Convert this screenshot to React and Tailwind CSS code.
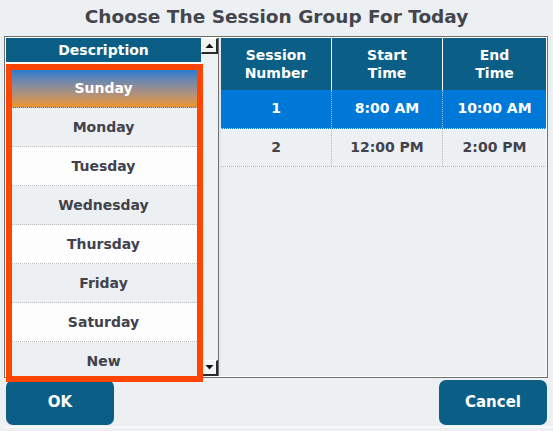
const DAYS = ["Sunday", "Monday", "Tuesday", "Wednesday", "Thursday", "Friday", "Saturday", "New"];

const SESSIONS = [
  { num: "1", start: "8:00 AM", end: "10:00 AM" },
  { num: "2", start: "12:00 PM", end: "2:00 PM" },
];

function ScrollBtn({ up }) {
  return (
    <div className="h-[16px] w-[17px] flex items-center justify-center bg-[#f3f4f5] border-t border-l border-white border-b-2 border-r-2 border-b-[#2b2b2b] border-r-[#2b2b2b]">
      <svg width="9" height="5" viewBox="0 0 9 5">
        {up ? <path d="M0.5 5 L4.5 0.5 L8.5 5 Z" fill="#111" /> : <path d="M0.5 0 L4.5 4.5 L8.5 0 Z" fill="#111" />}
      </svg>
    </div>
  );
}

export default function App() {
  return (
    <div className="relative w-[553px] h-[431px] overflow-hidden bg-[#ecf0f3] font-['DejaVu_Sans',sans-serif] font-bold">
      <div className="h-[36px] flex items-center justify-center text-[18.5px] text-[#45454d] pb-[2px]">
        Choose The Session Group For Today
      </div>

      <div className="ml-[4px] w-[544px] h-[342px] border border-[#6f6f6f] bg-white pt-[1px] px-px pb-px flex">
        {/* left list */}
        <div className="w-[195px] flex flex-col overflow-hidden">
          <div className="h-[24px] flex items-center justify-center bg-[#0b5f86] text-white text-[14px] shrink-0">
            Description
          </div>
          <div className="flex-1 overflow-hidden bg-white pt-[7px]">
            {DAYS.map((d, i) => (
              <div
                key={d}
                className={
                  "h-[39px] flex items-center justify-center text-[14px] border-b border-dotted border-[#bdbdbd] " +
                  (i === 0
                    ? "bg-linear-to-b from-[#1777d1] to-[#ec931d] text-white"
                    : i % 2 === 1
                    ? "bg-[#ecf0f3] text-[#42424c]"
                    : "bg-[#fdfdfd] text-[#42424c]")
                }
              >
                {d}
              </div>
            ))}
          </div>
        </div>

        {/* scrollbar */}
        <div className="w-[17px] flex flex-col justify-between bg-[#eef2f5]">
          <ScrollBtn up />
          <ScrollBtn />
        </div>

        {/* divider */}
        <div className="w-px bg-[#6f6f6f]" />
        <div className="w-[2px] bg-[#e4e8eb]" />

        {/* right table */}
        <div className="w-[325px] flex flex-col bg-[#ecf0f3]">
          <div className="h-[52px] flex bg-white gap-px shrink-0">
            {[
              ["Session", "Number"],
              ["Start", "Time"],
              ["End", "Time"],
            ].map(([a, b], i) => (
              <div
                key={a}
                className={
                  "flex flex-col items-center justify-center bg-[#0b5f86] text-white text-[14px] leading-[18px] " +
                  (i === 2 ? "w-[103px]" : "w-[110px]")
                }
              >
                <span>{a}</span>
                <span>{b}</span>
              </div>
            ))}
          </div>
          {SESSIONS.map((s, i) => {
            const sel = i === 0;
            const cell = "flex items-center justify-center border-r border-dotted " + (sel ? "border-[#9cc6ec]" : "border-[#b9b9b9]");
            return (
              <div
                key={s.num}
                className={
                  "h-[38.5px] flex text-[14px] border-b border-dotted " +
                  (sel ? "bg-[#0078d7] text-white border-[#c9d7e6]" : "bg-[#ecf0f3] text-[#42424c] border-[#b9b9b9]")
                }
              >
                <div className={"w-[111px] " + cell}>{s.num}</div>
                <div className={"w-[111px] " + cell}>{s.start}</div>
                <div className="w-[103px] flex items-center justify-center">{s.end}</div>
              </div>
            );
          })}
        </div>
      </div>

      {/* buttons */}
      <div className="mt-[2px] mx-[6px] flex justify-between">
        <button className="w-[108px] h-[45px] rounded-[7px] bg-[#0b5f86] text-white text-[15px] font-bold">OK</button>
        <button className="w-[108px] h-[45px] rounded-[7px] bg-[#0b5f86] text-white text-[15px] font-bold">Cancel</button>
      </div>
      <div className="mt-[1px] ml-[3px] h-[2px] bg-[#f7f8f9]" />

      {/* highlight box */}
      <div className="absolute left-[6px] top-[64px] w-[197px] h-[318px] border-[6px] border-[#ff4500]" />
    </div>
  );
}
